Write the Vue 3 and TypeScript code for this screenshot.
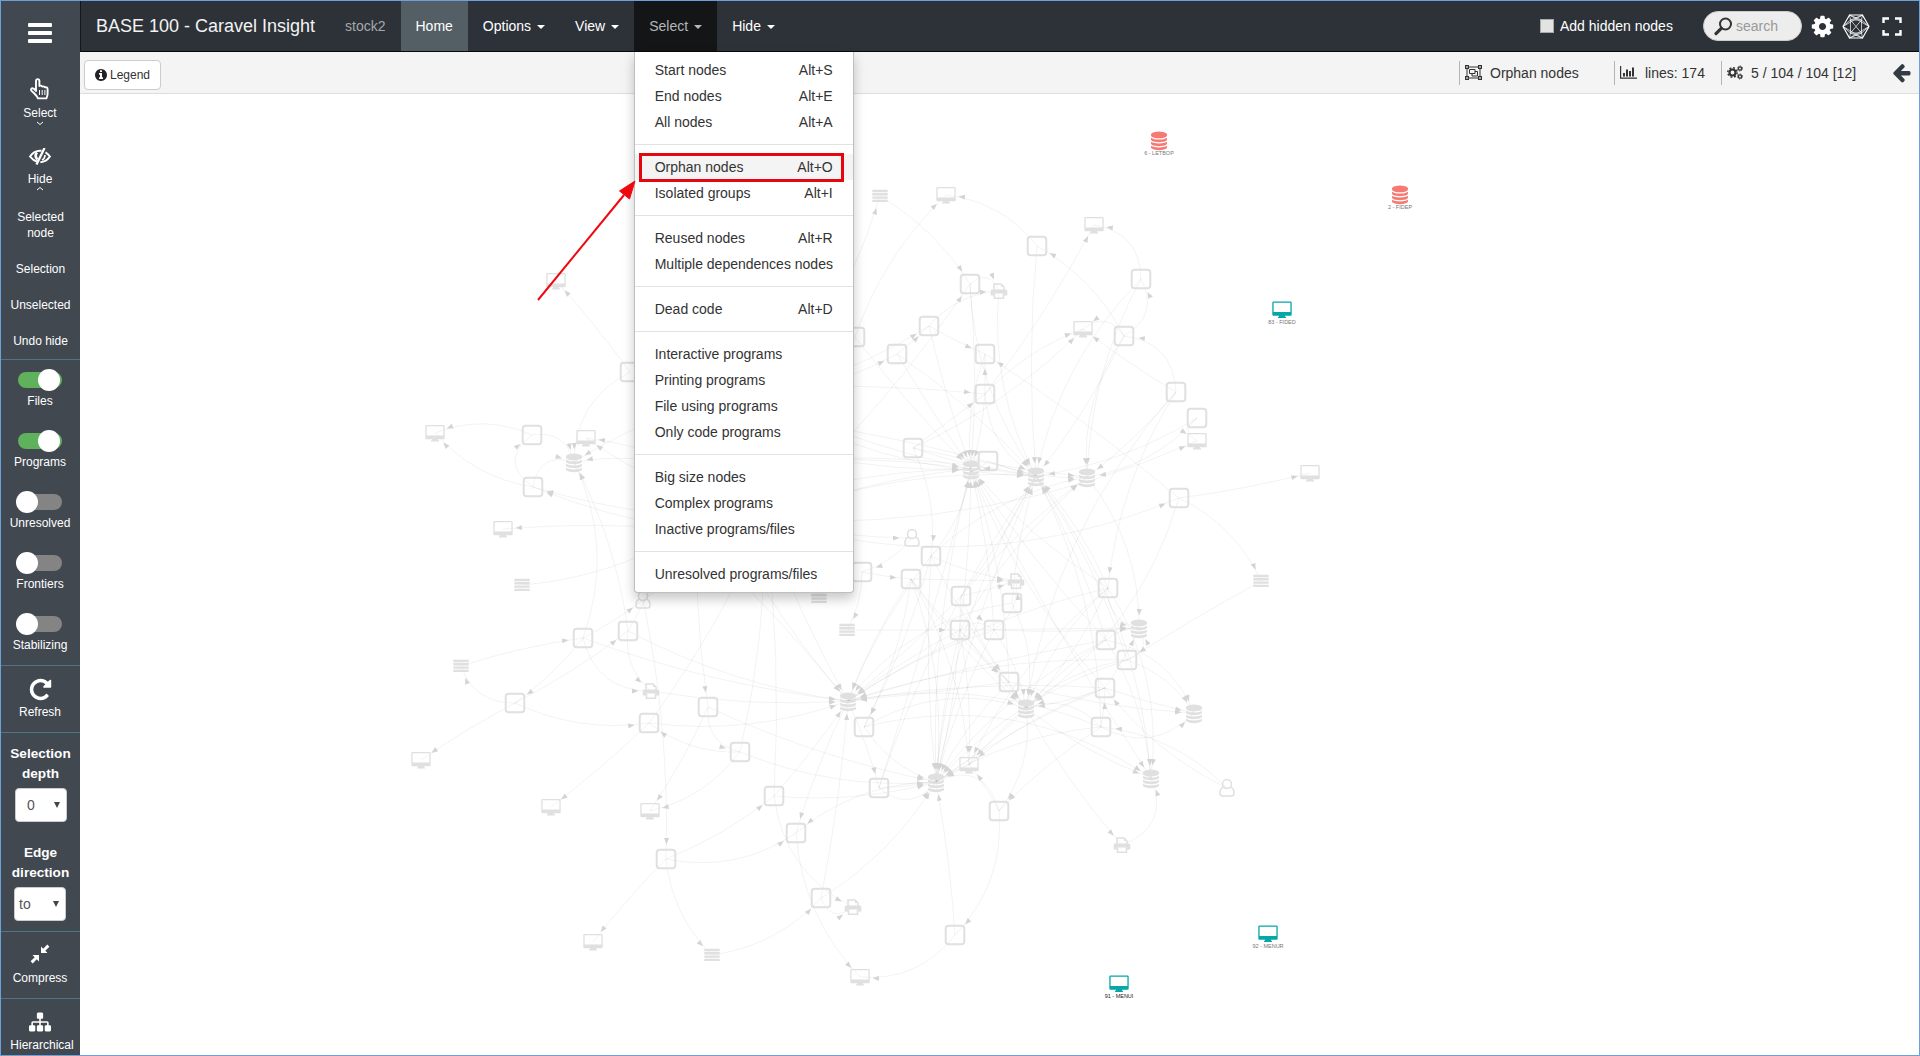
<script setup lang="ts">
type Kind = 'prog' | 'screen' | 'db' | 'list' | 'printer' | 'user' | 'hub'
interface GraphNode { id: string; kind: Kind; x: number; y: number; color?: string; label?: string; labelColor?: string }

const ICON = {
  db: 'M896 768q237 0 443-43t325-127v170q0 69-103 128t-280 93.5-385 34.5-385-34.5-280-93.5-103-128v-170q119 84 325 127t443 43zm0 768q237 0 443-43t325-127v170q0 69-103 128t-280 93.5-385 34.5-385-34.5-280-93.5-103-128v-170q119 84 325 127t443 43zm0-384q237 0 443-43t325-127v170q0 69-103 128t-280 93.5-385 34.5-385-34.5-280-93.5-103-128v-170q119 84 325 127t443 43zm0-1152q208 0 385 34.5t280 93.5 103 128v128q0 69-103 128t-280 93.5-385 34.5-385-34.5-280-93.5-103-128v-128q0-69 103-128t280-93.5 385-34.5z',
  cog: 'M1152 896q0-106-75-181t-181-75-181 75-75 181 75 181 181 75 181-75 75-181zm512-109v222q0 12-8 23t-20 13l-185 28q-19 54-39 91 35 50 107 138 10 12 10 25t-9 23q-27 37-99 108t-94 71q-12 0-26-9l-138-108q-44 23-91 38-16 136-29 186-7 28-36 28h-222q-14 0-24.5-8.5t-11.5-21.5l-28-184q-49-16-90-37l-141 107q-10 9-25 9-14 0-25-11-126-114-165-168-7-10-7-23 0-12 8-23 15-21 51-66.5t54-70.5q-27-50-41-99l-183-27q-13-2-21-12.5t-8-23.5v-222q0-12 8-23t19-13l186-28q14-46 39-92-40-57-107-138-10-12-10-24 0-10 9-23 26-36 98.5-107.5t94.5-71.5q13 0 26 10l138 107q44-23 91-38 16-136 29-186 7-28 36-28h222q14 0 24.5 8.5t11.5 21.5l28 184q49 16 90 37l142-107q9-9 24-9 13 0 25 10 129 119 165 170 7 8 7 22 0 12-8 23-15 21-51 66.5t-54 70.5q26 50 41 98l183 28q13 2 21 12.5t8 23.5z',
  repeat: 'M1664 256v448q0 26-19 45t-45 19h-448q-42 0-59-40-17-39 14-69l138-138q-148-137-349-137-104 0-198.5 40.5t-163.5 109.5-109.5 163.5-40.5 198.5 40.5 198.5 109.5 163.5 163.5 109.5 198.5 40.5q119 0 225-52t179-147q7-10 23-12 15 0 25 9l137 138q9 8 9.5 20.5t-7.5 22.5q-109 132-264 204.5t-327 72.5q-156 0-298-61t-245-164-164-245-61-298 61-298 164-245 245-164 298-61q147 0 284.5 55.5t244.5 156.5l130-129q29-31 70-14 39 17 39 59z',
  info: 'M1152 1376v-160q0-14-9-23t-23-9h-96v-512q0-14-9-23t-23-9h-320q-14 0-23 9t-9 23v160q0 14 9 23t23 9h96v320h-96q-14 0-23 9t-9 23v160q0 14 9 23t23 9h448q14 0 23-9t9-23zm-128-896v-160q0-14-9-23t-23-9h-192q-14 0-23 9t-9 23v160q0 14 9 23t23 9h192q14 0 23-9t9-23zm640 416q0 209-103 385.5t-279.5 279.5-385.5 103-385.5-103-279.5-279.5-103-385.5 103-385.5 279.5-279.5 385.5-103 385.5 103 279.5 279.5 103 385.5z',
  back: 'M1664 896v128q0 53-32.5 90.5t-84.5 37.5h-704l293 294q38 36 38 90t-38 90l-75 76q-37 37-90 37-52 0-91-37l-651-652q-37-37-37-90 0-52 37-91l651-650q38-38 91-38 52 0 90 38l75 74q38 38 38 91t-38 91l-293 293h704q52 0 84.5 37.5t32.5 90.5z',
  sitemap: 'M1792 1248v320q0 40-28 68t-68 28h-320q-40 0-68-28t-28-68v-320q0-40 28-68t68-28h96v-192h-512v192h96q40 0 68 28t28 68v320q0 40-28 68t-68 28h-320q-40 0-68-28t-28-68v-320q0-40 28-68t68-28h96v-192h-512v192h96q40 0 68 28t28 68v320q0 40-28 68t-68 28h-320q-40 0-68-28t-28-68v-320q0-40 28-68t68-28h96v-192q0-52 38-90t90-38h512v-192h-96q-40 0-68-28t-28-68v-320q0-40 28-68t68-28h320q40 0 68 28t28 68v320q0 40-28 68t-68 28h-96v192h512q52 0 90 38t38 90v192h96q40 0 68 28t28 68z',
}

const RAW: [Kind, string][] = [
  ['prog', 'a630,372 b532,435 c533,487 d1037,246 e970,284 f1141,279 g1124,336 h929,326 i855,337 j897,354 k985,354 l985,394 m1176,392 n1197,418 o913,448 p988,461 q1179,498 r931,556 s862,572 t911,579 u961,596 v1012,603 w1108,588 x960,630 y994,630 z1106,640 A1127,660 B1105,688 C1009,682 D864,727 E1101,727 F583,638 G628,631 H515,703 I708,707 J649,723 K740,752 L774,796 M796,833 N666,859 O821,898 P879,788 Q999,811 R955,935'],
  ['screen', '0556,281 1435,433 2586,438 3503,529 4946,195 51094,225 61083,329 71197,441 81310,473 9421,760 !551,807 @650,811 #593,942 $969,765 %860,977'],
  ['db', '^574,462 &971,469 *1036,476 (1087,477 )848,701 -936,782 =1026,708 +1139,628 [1194,713 ]1151,778'],
  ['list', '{522,585 }880,196 ;819,597 :847,630 <1261,581 >461,666 /712,955'],
  ['printer', '?999,291 |1016,581 ~651,691 `1122,845 _853,907'],
  ['user', '.643,600 "912,538 \'1227,788'],
  ['hub', 'α765,520 β700,470 γ690,530 δ740,390 ε680,410'],
]
const nodes: GraphNode[] = RAW.flatMap(([kind, list]) =>
  list.split(' ').map((s) => {
    const [x, y] = s.slice(1).split(',').map(Number)
    return { id: s[0], kind, x, y }
  }),
)
const highlighted: GraphNode[] = [
  { id: 'LETBOP', kind: 'db', x: 1159, y: 140, color: '#f57a74', label: '6 - LETBOP', labelColor: '#777' },
  { id: 'FIDEP', kind: 'db', x: 1400, y: 194, color: '#f57a74', label: '2 - FIDEP', labelColor: '#777' },
  { id: 'FIDED', kind: 'screen', x: 1282, y: 309.5, color: '#07a6a8', label: '83 - FIDED', labelColor: '#777' },
  { id: 'MENUR', kind: 'screen', x: 1268, y: 933.5, color: '#07a6a8', label: '92 - MENUR', labelColor: '#777' },
  { id: 'MENUI', kind: 'screen', x: 1119, y: 983.5, color: '#07a6a8', label: '91 - MENUI', labelColor: '#222' },
]
const byId = new Map(nodes.map((n) => [n.id, n]))

// Each link is source, target and bend; positive bends turn clockwise.
// Links are separated by commas because ";" is itself a node id.
const LINKS = `
a0 2,a^ 20,b1 14,c1 -12,cb -45,b^ -30,c^ -38,γc -4,αc -5,β2 5,δ^ 5,β^ 8,α2 -6,γ3 3,{γ 8,F^ 14,G^ 6
>F -3,H> -24,FH -5,HG 3,H9 2,HJ 10,F~ 26,G~ 18,F) 4,G) 6,~) 4,J) 8,KJ -12,K@ -12,IK 28,I@ -3,J! -2,.N -4,NL 5,NM 14,N# 2,N/ 12,/O 12
βI 4,Kα 4,L) 2,Lα 3,L_ 18,M% 12,O_ 45,O- 8,-M 12,K- 8,I- 4,L- 6,Jα 4,α) 3,β) 5,γ) -2,Gγ -2,F. 3,O) 2,)M 3,P- 2,P- 34,D- 12,)P -3
β} 10,}e -8,i4 -8,αi 4,l5 3,d4 14,gd 10,mg 28,gf 32,f5 28,g6 36,m6 -2,l6 -8,o6 6,e? -45,h? -14,αe 4,lk 0,hk 2,εh 8,εj 8,jh 2,ol 0,δl -3
e& -3,h& 2,j& 1,k& 8,l& -4,i& 2,δ& 4,ε& 8,β& -5,α& -5,γ& -7,r& 10,x& 2,y& 3,C& 5,P& 1,p& -15,w& -5,z& -3,B& -6
d* 3,e* 10,l* 18,j* -4,g* -4,f* 10,?* 10,δ* 9,ε* -4,β* -6,α* -8,u* 3,v* -4,w* 6,z* 4,P* -5,E* 8,A* 5,n* -7,o* 4
g( 12,f( 8,m( -4,n( -12,o( 2,p( 8,r( -10,x( -6,u( -4
α7 8,n7 50,αq 12,q8 2,q< -12,<A 1,qk 2,mw 8,α" 4,"s -10,or -10,s: -9,st 2,:x 0,α; 2,α. 0,t| 0,u| 2,r| 5,y| 20,xy -28,tC 4
x+ 0,y+ 2,z+ -12,A+ 40,w+ 28,(+ -12,B+ 3,uC 5,xC 2,w= 8,z= 5,B= -4,A= 10,C= 2,x= 1,y= -8,t= 5,v= -12,r= 3,q= -12,m= 10
w) 6,x) 3,y) 5,t) 4,u) -2,z) 2,B) 4,E) 10,C) -1,v) 14,A) 6,r) 5,D= -15,E= 22,EB 3
A[ -12,B[ 2,C[ 4,z[ -18,E[ 25,'B -8,'E 12,&] 2,w] -12,z] -8,=] 5,*] -10,D] -15,=\` 4,\`] 34,&- 5,t- -8,u- -4,x- 3,y- 4,C- 6,w- -10,z- 8,B- 4,E- 8,A- 9,$- 2,Q- 40,R- 2,*- 8
t$ -8,x$ -4,B$ 6,w$ 8,Q$ 4,=$ 3,=Q -14,EQ 4,QR -15,R% -18,r- 3,tD -6,rD -4,*- 4
`
interface Link { path: string; head: string }
const links: Link[] = LINKS.split(/[\n,]/).flatMap((s) => {
  const m = s.trim().match(/^(\S)(\S) (-?\d+)$/)
  if (!m) return []
  const a = byId.get(m[1])
  const b = byId.get(m[2])
  if (!a || !b) return []
  const k = Number(m[3]) / 67
  const dx = b.x - a.x
  const dy = b.y - a.y
  const cx = (a.x + b.x) / 2 - dy * k
  const cy = (a.y + b.y) / 2 + dx * k
  const tx = b.x - cx
  const ty = b.y - cy
  const len = Math.hypot(tx, ty) || 1
  const ux = tx / len
  const uy = ty / len
  const gap = b.kind === 'prog' ? 14.5 : 12.5
  const hx = b.x - ux * gap
  const hy = b.y - uy * gap
  const ex = hx - ux * 6.5
  const ey = hy - uy * 6.5
  const f = (v: number) => v.toFixed(1)
  return [{
    path: `M${a.x} ${a.y}Q${f(cx)} ${f(cy)} ${b.x} ${b.y}`,
    head: `M${f(hx)} ${f(hy)}L${f(ex - uy * 2.5)} ${f(ey + ux * 2.5)}L${f(ex + uy * 2.5)} ${f(ey - ux * 2.5)}z`,
  }]
})

const menuGroups: [string, string?][][] = [
  [['Start nodes', 'Alt+S'], ['End nodes', 'Alt+E'], ['All nodes', 'Alt+A']],
  [['Orphan nodes', 'Alt+O'], ['Isolated groups', 'Alt+I']],
  [['Reused nodes', 'Alt+R'], ['Multiple dependences nodes']],
  [['Dead code', 'Alt+D']],
  [['Interactive programs'], ['Printing programs'], ['File using programs'], ['Only code programs']],
  [['Big size nodes'], ['Complex programs'], ['Inactive programs/files']],
  [['Unresolved programs/files']],
]
const toggles = [
  { label: 'Files', on: true },
  { label: 'Programs', on: true },
  { label: 'Unresolved', on: false },
  { label: 'Frontiers', on: false },
  { label: 'Stabilizing', on: false },
]
const hex: [number, number][] = [[1, 12.5], [7.5, 1], [20.5, 1], [27, 12.5], [20.5, 24], [7.5, 24]]
const inner: [number, number][] = [[8.5, 6], [19.5, 6], [19.5, 19], [8.5, 19]]
const hexLines =
  inner.flatMap((p, i) => inner.slice(i + 1).map((q) => `M${p[0]} ${p[1]}L${q[0]} ${q[1]}`)).join('') +
  'M1 12.5L8.5 6 7.5 1 19.5 6 20.5 1 8.5 6M27 12.5L19.5 6M1 12.5L8.500 19 7.500 24 19.500 19 20.500 24 8.500 19M27 12.500L19.500 19M1 12.500L20.500 1M27 12.500L7.500 24M1 12.500L20.500 24M27 12.500L7.500 1'
const hexOutline = 'M' + hex.map((p) => p.join(' ')).join('L') + 'z'
</script>

<template>
  <div class="app">
    <aside class="sidebar">
      <div class="burger"><i></i><i></i><i></i></div>
      <div class="tool select-tool">
        <svg width="22" height="22" viewBox="0 0 22 22" fill="none" stroke="#fff" stroke-width="1.9" stroke-linejoin="round">
          <path d="M7 13V3q0-1.900 1.700-1.900T10.400 3v5q2-1 2.900.6 2-.7 2.700.8 2.600-.6 2.600 2v4q0 2.500-1.200 5H9q-1.200-2.500-3.600-4.900L2.300 12.600q-.8-1.900 1-2.400 1.800 0 3.700 2.800z" />
          <path d="M10.500 12v5M13.200 12v5M15.900 12v5" stroke-width="1" />
        </svg>
        <span>Select</span>
        <svg width="8" height="5" viewBox="0 0 8 5" fill="none" stroke="#fff"><path d="M1 1l3 2.500L7 1" /></svg>
      </div>
      <div class="tool hide-tool">
        <svg width="22" height="17" viewBox="0 0 22 17" fill="none" stroke="#fff" stroke-width="2">
          <path d="M8.500 13.800Q4 12.500 1 8.500 5 2.700 11 2.700h1.500M16.500 4.300q2.600 1.600 4.400 4.200-3.500 5.300-9.500 5.700" />
          <path d="M8 4.500Q5 8 8.500 11.500" stroke-width="2.600" />
          <path d="M15.500 0L7.500 16.500" stroke-width="2.300" />
          <path d="M16 7q0 3.500-3 5" stroke-width="1.600" />
        </svg>
        <span>Hide</span>
        <svg width="8" height="5" viewBox="0 0 8 5" fill="none" stroke="#fff"><path d="M1 4l3-2.500L7 4" /></svg>
      </div>
      <div class="sub two">Selected<br />node</div>
      <div class="sub">Selection</div>
      <div class="sub">Unselected</div>
      <div class="sub">Undo hide</div>
      <section class="switches">
        <div v-for="t in toggles" :key="t.label" class="switch" :class="{ on: t.on }">
          <div class="track"><i></i></div>
          <span>{{ t.label }}</span>
        </div>
      </section>
      <section class="refresh">
        <svg width="25" height="25" viewBox="0 0 1792 1792" fill="#fff"><path :d="ICON.repeat" /></svg>
        <span>Refresh</span>
      </section>
      <section class="fields">
        <b>Selection depth</b>
        <div class="field depth"><span>0</span><i></i></div>
        <b>Edge direction</b>
        <div class="field dir"><span>to</span><i></i></div>
      </section>
      <section class="compress">
        <svg width="20" height="20" viewBox="0 0 20 20" fill="#fff">
          <path d="M11 9V2.500l2.200 2.200L17.300.6l2.100 2.100-4.100 4.100L17.500 9zM9 11v6.500l-2.200-2.200-4.100 4.100-2.100-2.100 4.100-4.100L2.500 11z" />
        </svg>
        <span>Compress</span>
      </section>
      <section class="hier">
        <svg width="22" height="22" viewBox="0 0 1792 1792" fill="#fff"><path :d="ICON.sitemap" /></svg>
        <span>Hierarchical</span>
      </section>
    </aside>

    <main class="main">
      <nav class="navbar">
        <span class="brand">BASE 100 - Caravel Insight</span>
        <span class="stock">stock2</span>
        <span class="nav home">Home</span>
        <span class="nav">Options<i class="caret"></i></span>
        <span class="nav">View<i class="caret"></i></span>
        <span class="nav open">Select<i class="caret"></i>
          <div class="menu">
            <ul v-for="(g, gi) in menuGroups" :key="gi">
              <li v-for="it in g" :key="it[0]" :class="{ hover: it[0] === 'Orphan nodes' }">
                <span>{{ it[0] }}</span><span v-if="it[1]">{{ it[1] }}</span>
              </li>
            </ul>
          </div>
        </span>
        <span class="nav">Hide<i class="caret"></i></span>
        <div class="right">
          <i class="check"></i>
          <span class="add">Add hidden nodes</span>
          <div class="search">
            <svg width="19" height="19" viewBox="0 0 19 19" fill="none" stroke="#333"><circle cx="11.500" cy="7" r="5.500" stroke-width="2" /><path d="M7.300 11.300L2 16.600" stroke-width="3.200" stroke-linecap="round" /></svg>
            <span>search</span>
          </div>
          <svg class="gear" width="25" height="25" viewBox="0 0 1792 1792" fill="#fff"><path :d="ICON.cog" /></svg>
          <svg class="hex" width="28" height="25" viewBox="0 0 28 25" fill="none" stroke="#fff"><path :d="hexLines" stroke-width=".7" /><path :d="hexOutline" stroke-width="1.200" /></svg>
          <svg width="20" height="19" viewBox="0 0 20 19" fill="none" stroke="#fff" stroke-width="2.400"><path d="M1.500 6V1.500H7M13 1.500h5.500V6M18.500 13v4.500H13M7 17.500H1.500V13" /></svg>
        </div>
      </nav>

      <div class="infobar">
        <button class="legend"><svg width="12" height="12" viewBox="128 128 1536 1536" fill="#222"><path :d="ICON.info" /></svg>Legend</button>
        <div class="stat s1">
          <svg width="17" height="15" viewBox="0 0 17 15" fill="none" stroke="#333"><path d="M2 2h13v11H2z" /><path d="M4.500 4.500h5.500v4H4.500zM10 6.500h2.500v4.500H7V8.500" /><g fill="#333" stroke="none"><path d="M0 0h4v4H0zM13 0h4v4h-4zM0 11h4v4H0zM13 11h4v4h-4z" /><path d="M1.200 1.200h1.600v1.600H1.200zM14.200 1.200h1.600v1.600h-1.600zM1.200 12.200h1.600v1.600H1.200zM14.200 12.200h1.600v1.600h-1.600z" fill="#f4f4f4" /></g></svg>
          <span>Orphan nodes</span>
        </div>
        <div class="stat s2">
          <svg width="17" height="13" viewBox="0 0 17 13" fill="#333"><path d="M0 0h1.200v11.500H17v1.200H0zM3 7h2v3.500H3zM6 3.500h2v7H6zM9 5h2v5.500H9zM12 1.500h2v9h-2z" /></svg>
          <span>lines: 174</span>
        </div>
        <div class="stat s3">
          <svg width="16" height="15" viewBox="0 0 16 15" fill="none" stroke="#333"><circle cx="5.500" cy="7.500" r="3" stroke-width="2.200" /><circle cx="5.500" cy="7.500" r="4.700" stroke-width="1.500" stroke-dasharray="1.900 1.790" /><circle cx="13" cy="3.500" r="1.600" stroke-width="1.300" /><circle cx="13" cy="3.500" r="2.500" stroke-dasharray="1 .96" /><circle cx="13" cy="11.500" r="1.600" stroke-width="1.300" /><circle cx="13" cy="11.500" r="2.500" stroke-dasharray="1 .96" /></svg>
          <span>5 / 104 / 104 [12]</span>
        </div>
        <svg class="back" width="21" height="21" viewBox="0 0 1792 1792" fill="#333b44"><path :d="ICON.back" /></svg>
      </div>

      <svg class="graph" width="1839" height="961" viewBox="80 94 1839 961">
        <defs>
          <g id="n-prog"><rect x="-9.300" y="-9.300" width="18.600" height="18.600" rx="3" fill="none" stroke="currentColor" stroke-width="2" /></g>
          <g id="n-screen"><path fill-rule="evenodd" fill="currentColor" d="M-8.500-8h17q1.200 0 1.200 1.200V5q0 1.200-1.200 1.200H3V7.200H4V8.400H-4V7.200H-3V6.200H-8.500Q-9.700 6.200-9.700 5V-6.800Q-9.700-8-8.500-8zM-8.400-6.800V2.600H8.400V-6.800z" /></g>
          <g id="n-db"><path transform="translate(-9.3 -8.4) scale(.01038)" fill="currentColor" :d="ICON.db" /></g>
          <g id="n-list"><path d="M-7.700-5h15.400M-7.700-1.700h15.400M-7.700 1.600h15.400M-7.700 4.900h15.400" stroke="currentColor" stroke-width="2.400" /></g>
          <g id="n-printer"><path d="M-5 0v-7h7l3 3v4M-4.500 2.500v4.700h9v-4.700" fill="none" stroke="currentColor" stroke-width="1.500" /><path d="M-8.300 4.500V0q0-1.500 1.500-1.500H6.800Q8.300-1.500 8.300 0v4.500H5V2.500H-5v2zM2-7v3h3z" fill="currentColor" /></g>
          <g id="n-user" fill="none" stroke="currentColor" stroke-width="1.500"><circle cx="0" cy="-4" r="4.500" /><path d="M-3.500-1Q-7 0-7 5.500-7 8-4.500 8h9Q7 8 7 5.500 7 0 3.500-1" /></g>
        </defs>
        <path v-for="(l, i) in links" :key="'l' + i" :d="l.path" fill="none" stroke="#000" stroke-opacity=".05" />
        <g class="dim">
          <template v-for="n in nodes" :key="n.id"><use v-if="n.kind !== 'hub'" :href="'#n-' + n.kind" :x="n.x" :y="n.y" /></template>
        </g>
        <path v-for="(l, i) in links" :key="'h' + i" :d="l.head" fill="#d4d4d4" />
        <g v-for="n in highlighted" :key="n.id" :color="n.color">
          <use :href="'#n-' + n.kind" :x="n.x" :y="n.y" />
          <text :x="n.x" :y="n.y + 14.500" :fill="n.labelColor" text-anchor="middle">{{ n.label }}</text>
        </g>
      </svg>
    </main>

    <div class="mark"></div>
    <svg class="pointer" width="102" height="124" viewBox="0 0 102 124"><path d="M3 121L89 16" stroke="#f00810" stroke-width="2" /><path d="M100 2L94.500 20 84.500 12z" fill="#f00810" stroke="#f00810" /></svg>
  </div>
</template>

<style>
html, body { margin: 0; background: #fff; overflow: hidden; }
</style>

<style scoped>
* { box-sizing: border-box; }
.app { position: relative; display: flex; width: 1920px; height: 1056px; overflow: hidden; border: 1px solid #6b9fdd; font: 14px/20px "Liberation Sans", Arial, sans-serif; color: #333; background: #fff; }
.sidebar { width: 79px; height: 1054px; flex: none; background: #414850; color: #fff; font-size: 12px; line-height: 16px; text-align: center; display: flex; flex-direction: column; overflow: hidden; }
.sidebar svg { display: block; flex: none; }
.burger { height: 77px; flex: none; padding: 22px 0 0 27px; display: flex; flex-direction: column; gap: 4px; }
.burger i { width: 24px; height: 4px; background: #fff; border-radius: 1px; }
.tool { display: flex; flex-direction: column; align-items: center; flex: none; padding-right: 1px; }
.select-tool { height: 69px; }
.select-tool span { margin-top: 5px; }
.hide-tool { height: 61px; padding-top: 1px; }
.hide-tool span { margin-top: 6px; }
.hide-tool svg:last-child { margin-top: -1px; }
.sub { height: 36px; flex: none; padding: 1px 0 0 0; }
.sub.two { height: 52px; }
.sidebar > section { border-top: 1px solid #4b7785; flex: none; display: flex; flex-direction: column; align-items: center; padding-right: 1px; }
.sub + section { margin-top: -9px; }
.sidebar > .switches { height: 306px; padding-top: 10px; }
.switch { height: 61px; display: flex; flex-direction: column; align-items: center; flex: none; }
.track { width: 44px; height: 16px; border-radius: 8px; background: #848484; display: flex; align-items: center; margin-top: 2px; margin-bottom: 5px; }
.track i { width: 22px; height: 22px; flex: none; border-radius: 50%; background: #fff; margin-left: -2px; }
.on .track { background: #5fb15c; }
.on .track i { margin-left: 20px; }
.sidebar > .refresh { height: 67px; padding-top: 11px; }
.refresh span { margin-top: 2px; }
.sidebar > .fields { height: 199px; padding-top: 11px; }
.fields b { font-size: 13.600px; line-height: 20px; width: 70px; margin-left: 1px; }
.field { width: 52px; height: 34px; margin-top: 4px; background: #fff; border: 1px solid #ccc; border-radius: 4px; color: #555; font-size: 14px; line-height: 32px; display: flex; align-items: center; justify-content: space-between; padding: 0 6px 0 11px; }
.depth { margin-bottom: 21px; margin-left: 2px; }
.dir { padding-left: 4px; }
.field i { border: 3px solid transparent; border-top: 6px solid #444; border-bottom: 0; }
.sidebar > .compress { height: 67px; padding-top: 12px; }
.compress span { margin-top: 6px; }
.sidebar > .hier { height: 60px; padding-top: 12px; }
.hier span { margin-top: 4px; margin-left: 4px; }
.main { flex: 1; min-width: 0; display: flex; flex-direction: column; }
.navbar { height: 51px; flex: none; display: flex; background: #2d3239; border-bottom: 1px solid #080808; color: #fff; line-height: 50px; border-left: 1px solid #14171a; white-space: nowrap; }
.brand { font-size: 18px; width: 249px; padding-left: 15px; color: #f2f2f2; }
.stock { width: 70.500px; padding-left: 15px; color: #a6a8aa; }
.nav { padding: 0 15px; display: flex; align-items: center; position: relative; }
.home { background: #545f65; }
.open { background: #131517; color: #b5b7b8; }
.caret { border: 4px solid transparent; border-top-color: currentColor; border-bottom: 0; margin-left: 6px; margin-top: 2px; }
.menu { position: absolute; z-index: 5; left: -.5px; top: 51px; width: 220px; height: 541px; background: #fff; border: 1px solid rgba(0, 0, 0, .25); border-top: 0; border-radius: 0 0 4px 4px; box-shadow: 0 6px 12px rgba(0, 0, 0, .22); padding: 5px 0; color: #333; }
.menu ul { list-style: none; margin: 0; padding: 0; }
.menu ul + ul { border-top: 1px solid #e2e2e2; margin-top: 9px; padding-top: 9px; }
.menu li { height: 26px; line-height: 26px; padding: 0 20px; display: flex; justify-content: space-between; }
.menu li.hover { background: #f4f4f4; }
.right { margin-left: auto; display: flex; align-items: center; padding-right: 17px; }
.check { width: 14px; height: 14px; background: #e3e3e3; border: 1px solid #aaa; margin-right: 6px; }
.add { width: 143px; }
.search { width: 99px; height: 30px; border-radius: 15px; background: #ededed; border: 1px solid #ccc; display: flex; align-items: center; line-height: 28px; padding-left: 10px; gap: 3px; color: #999; margin-right: 8px; }
.hex { margin: 0 12px 0 7px; }
.infobar { height: 42px; flex: none; background: #f4f4f4; border-bottom: 1px solid #ddd; display: flex; align-items: center; }
.legend { width: 77px; height: 30px; margin: 4px 0 0 4px; background: #fff; border: 1px solid #ccc; border-radius: 4px; padding: 0 0 0 10px; display: flex; align-items: center; gap: 3px; font: 12px "Liberation Sans", Arial, sans-serif; color: #333; }
.stat { height: 24px; border-left: 1px solid #b5b5b5; display: flex; align-items: center; padding-left: 5px; gap: 8px; white-space: nowrap; }
.s1 { margin-left: auto; width: 155px; }
.s2 { width: 107px; }
.s3 { width: 170px; padding-left: 5px; }
.back { margin-right: 7px; }
.graph { display: block; flex: none; }
.graph text { font: 5.500px "Liberation Sans", Arial, sans-serif; }
.dim { color: #e0e0e0; }
.mark { position: absolute; z-index: 6; left: 638px; top: 152px; width: 205px; height: 29px; border: 3px solid #e6060f; }
.pointer { position: absolute; z-index: 6; left: 534px; top: 178px; }
</style>
